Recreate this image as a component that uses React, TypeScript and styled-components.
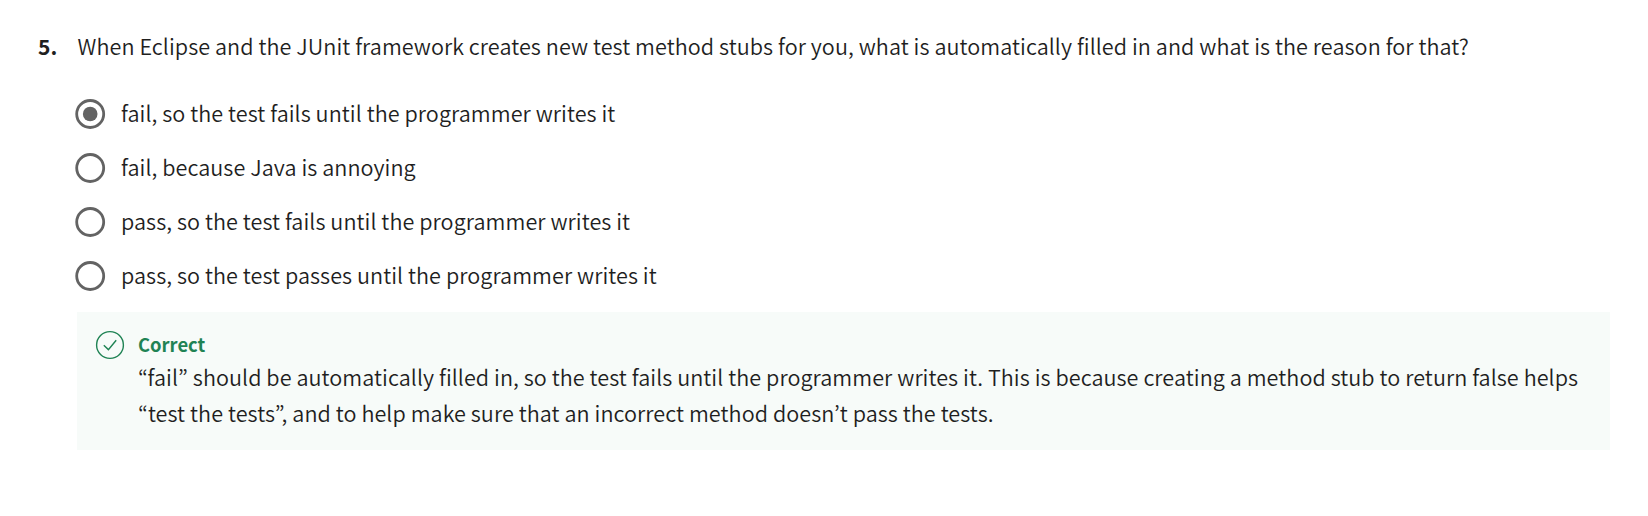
import React from "react";
import styled, { createGlobalStyle } from "styled-components";

const GlobalStyle = createGlobalStyle`
  body {
    margin: 0;
    background: #ffffff;
    color: #1f1f1f;
    font-family: "Noto Sans CJK KR", "Noto Sans", sans-serif;
    font-size: 21.6px;
    font-weight: 350;
    letter-spacing: 0.056px;
    line-height: 36px;
  }
`;

const Page = styled.main`
  display: flex;
  box-sizing: border-box;
  width: 1648px;
  padding: 28px 38px 0 38px;
`;

const QuestionNumber = styled.div`
  flex: 0 0 39px;
  font-size: 21px;
  font-weight: 700;
`;

const Question = styled.section`
  flex: 1;
  min-width: 0;
`;

const Prompt = styled.p`
  margin: 0;
  padding-left: 0.6px;
  white-space: nowrap;
`;

const Options = styled.div`
  display: flex;
  flex-direction: column;
  gap: 18px;
  margin: 31px 0 0 -1.6px;
`;

const Option = styled.label`
  display: flex;
  align-items: center;
  gap: 15.6px;
  height: 36px;
  white-space: nowrap;
`;

const Radio = styled.svg`
  flex: none;
  width: 30px;
  height: 30px;
  margin-top: 2px;
  overflow: visible;
`;

const RadioRing = styled.circle`
  fill: none;
  stroke: #636363;
  stroke-width: 2.8;
`;

const RadioDot = styled.circle`
  fill: #636363;
`;

const Feedback = styled.div`
  display: flex;
  gap: 13px;
  box-sizing: border-box;
  width: 1533px;
  height: 138px;
  margin-top: 19px;
  padding: 14px 18px 0;
  background: #f7fbf9;
`;

const CheckIcon = styled.svg`
  flex: none;
  width: 30px;
  height: 30px;
  margin-top: 4px;
  fill: none;
  stroke: #1f8354;
  stroke-width: 1.4;
`;

const FeedbackTitle = styled.div`
  height: 34px;
  color: #1f8354;
  font-size: 18.4px;
  font-weight: 700;
  letter-spacing: 0;
`;

const FeedbackText = styled.div`
  margin-top: -1px;
  white-space: nowrap;
`;

const options = [
  { text: "fail, so the test fails until the programmer writes it", checked: true },
  { text: "fail, because Java is annoying" },
  { text: "pass, so the test fails until the programmer writes it" },
  { text: "pass, so the test passes until the programmer writes it" },
];

export default function App() {
  return (
    <>
      <GlobalStyle />
      <Page>
        <QuestionNumber>5.</QuestionNumber>
        <Question>
          <Prompt>
            When Eclipse and the JUnit framework creates new test method stubs for you, what is
            automatically filled in and what is the reason for that?
          </Prompt>
          <Options>
            {options.map((o) => (
              <Option key={o.text}>
                <Radio viewBox="0 0 30 30">
                  <RadioRing cx="15.2" cy="15" r="13.5" />
                  {o.checked && <RadioDot cx="15.2" cy="15" r="7.3" />}
                </Radio>
                {o.text}
              </Option>
            ))}
          </Options>
          <Feedback>
            <CheckIcon viewBox="0 0 30 30">
              <circle cx="15" cy="15" r="13.4" />
              <path d="M8.8 15.2 L13.4 19.6 L21.2 10.2" />
            </CheckIcon>
            <div>
              <FeedbackTitle>Correct</FeedbackTitle>
              <FeedbackText>
                “fail” should be automatically filled in, so the test fails until the programmer
                writes it. This is because creating a method stub to return false helps
                <br />
                “test the tests”, and to help make sure that an incorrect method doesn’t pass the
                tests.
              </FeedbackText>
            </div>
          </Feedback>
        </Question>
      </Page>
    </>
  );
}
